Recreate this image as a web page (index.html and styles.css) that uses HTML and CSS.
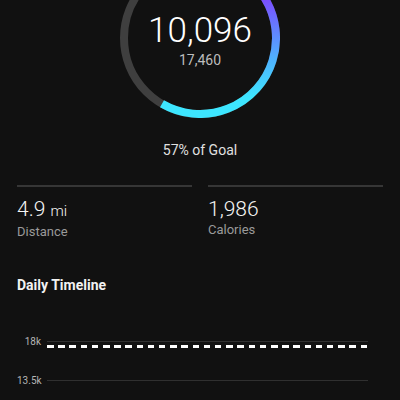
FILE: index.html
```html
<!DOCTYPE html>
<html lang="en">
<head>
  <meta charset="UTF-8" />
  <meta name="viewport" content="width=device-width, initial-scale=1.0" />
  <title>Steps</title>
  <link rel="stylesheet" href="styles.css">
</head>
<body>
  <div class="ring">
    <svg class="ring-svg" width="160" height="160" viewBox="0 0 160 160">
      <defs>
        <linearGradient id="arcGrad" gradientUnits="userSpaceOnUse" x1="0" y1="140" x2="0" y2="40">
          <stop offset="0" stop-color="#3de6ff" />
          <stop offset="0.4" stop-color="#4fb0ff" />
          <stop offset="0.62" stop-color="#5e8bff" />
          <stop offset="1" stop-color="#7b4cff" />
        </linearGradient>
      </defs>
      <circle cx="80" cy="80" r="76" fill="none" stroke="#3f3f3f" stroke-width="8" />
      <path d="M 42 145.82 A 76 76 0 1 0 86.62 4.29" fill="none" stroke="url(#arcGrad)" stroke-width="8" />
    </svg>
    <div class="ring-text">
      <div class="steps">10,096</div>
      <div class="goal">17,460</div>
    </div>
  </div>

  <p class="percent">57% of Goal</p>

  <div class="stats">
    <div class="stat">
      <div class="value">4.9 <span class="unit">mi</span></div>
      <div class="label">Distance</div>
    </div>
    <div class="stat">
      <div class="value">1,986</div>
      <div class="label">Calories</div>
    </div>
  </div>

  <h2 class="section-title">Daily Timeline</h2>

  <div class="chart">
    <div class="row"><span class="tick">18k</span><span class="grid-line"></span></div>
    <div class="row"><span class="tick">13.5k</span><span class="grid-line"></span></div>
    <div class="goal-line"></div>
  </div>
</body>
</html>
```

FILE: styles.css
```css
* { box-sizing: border-box; margin: 0; padding: 0; }
body {
  font-family: Roboto, 'Liberation Sans', sans-serif;
  background-color: #111111; color: #f2f2f2;
  overflow: hidden;
}
.ring {
  display: grid; width: 160px; height: 160px;
  margin: -42px auto 0;
}
.ring-svg, .ring-text { grid-area: 1 / 1; }
.ring-text {
  padding-top: 53px; text-align: center;
}
.steps {
  font-size: 35px; line-height: 40px;
  font-weight: 300; color: #ffffff;
}
.goal {
  font-size: 14px; line-height: 18px;
  color: #bdbdbd;
}
.percent {
  margin-top: 22px; text-align: center;
  font-size: 14px; line-height: 20px; color: #e0e0e0;
}
.stats {
  display: grid; grid-template-columns: 1fr 1fr;
  gap: 16px; padding: 0 17px;
  margin-top: 25px;
}
.stat {
  border-top: 2px solid #363636;
  padding-top: 10px;
}
.value {
  font-size: 21px; line-height: 24px;
  font-weight: 300; color: #f5f5f5;
}
.unit { font-size: 15px; }
.label {
  margin-top: 1px; font-size: 13px;
  line-height: 16px; color: #9a9a9a;
}
.section-title {
  margin-top: 35px; padding: 0 17px;
  font-size: 14px; line-height: 20px;
  font-weight: 700; color: #f2f2f2;
}
.chart {
  position: relative;
  margin-top: 27px; padding: 0 32px 0 17px;
}
.row {
  display: grid; grid-template-columns: 24px 1fr;
  column-gap: 6px; align-items: center;
  height: 39px;
}
.tick {
  text-align: right; font-size: 10px;
  color: #b5b5b5;
}
.grid-line {
  height: 1px; background: #303030;
}
.goal-line {
  position: absolute; top: 23px; left: 47px; right: 32px;
  height: 3px;
  background: repeating-linear-gradient(90deg, #ffffff 0 6.5px, transparent 6.5px 11.2px);
}
```
